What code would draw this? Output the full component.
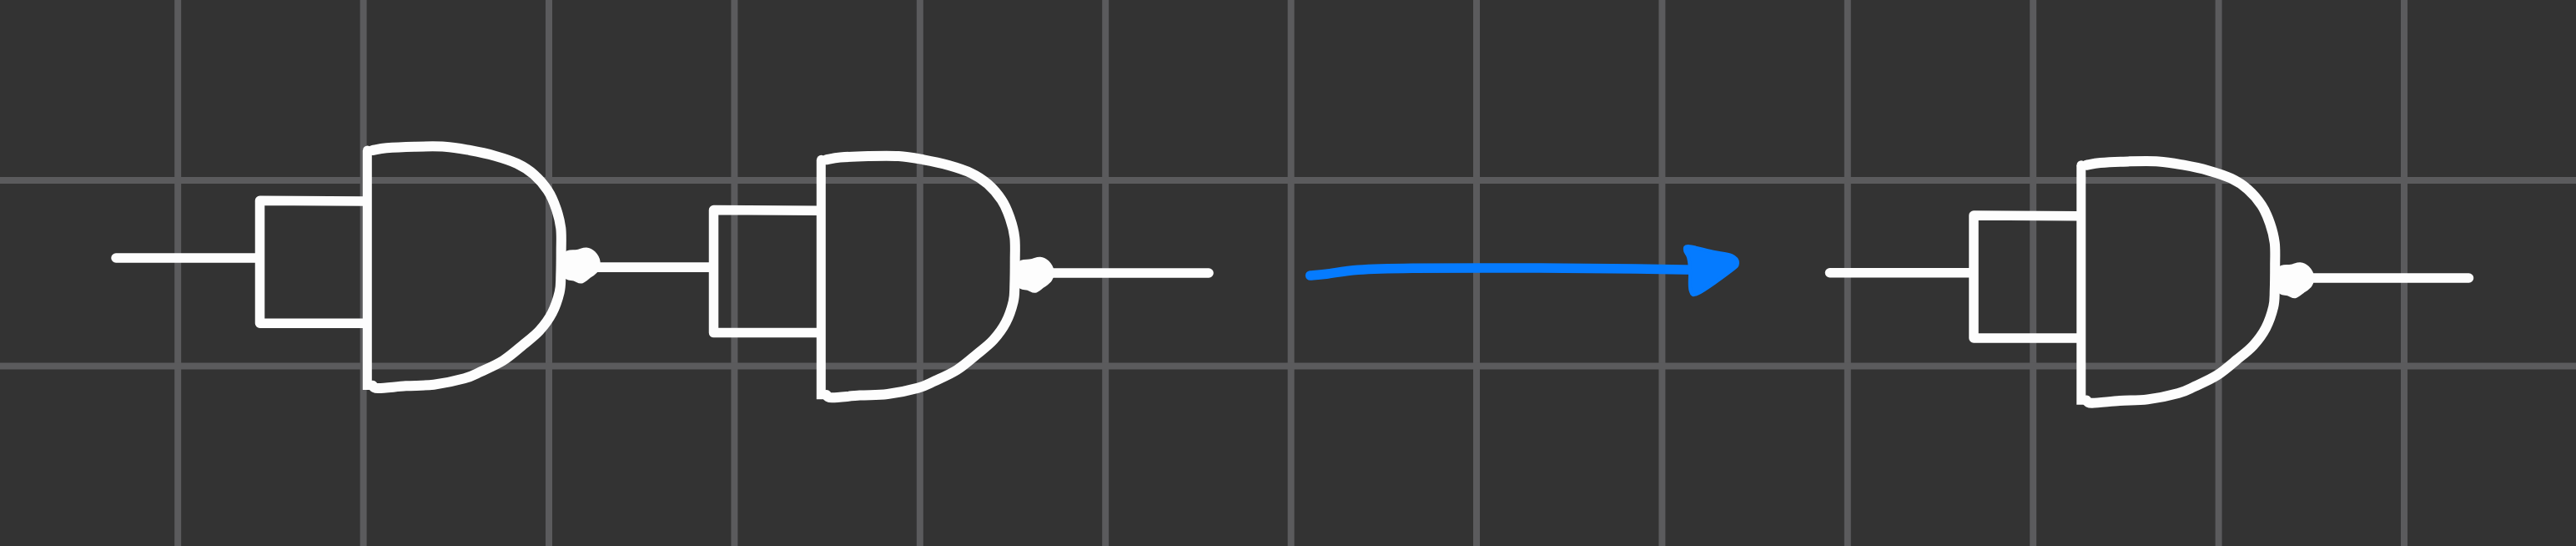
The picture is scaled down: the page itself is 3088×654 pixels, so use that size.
type Pt = [number, number];

// Catmull-Rom through hand-traced points, the strokes are freehand
const smooth = (pts: Pt[], closed = false) => {
  const n = pts.length;
  const at = (i: number) => (closed ? pts[(i + n) % n] : pts[Math.max(0, Math.min(n - 1, i))]);
  let d = `M${pts[0][0]},${pts[0][1]}`;
  const last = closed ? n : n - 1;
  for (let i = 0; i < last; i++) {
    const [p0, p1, p2, p3] = [at(i - 1), at(i), at(i + 1), at(i + 2)];
    const c1 = [p1[0] + (p2[0] - p0[0]) / 6, p1[1] + (p2[1] - p0[1]) / 6];
    const c2 = [p2[0] - (p3[0] - p1[0]) / 6, p2[1] - (p3[1] - p1[1]) / 6];
    d += ` C${c1[0].toFixed(1)},${c1[1].toFixed(1)} ${c2[0].toFixed(1)},${c2[1].toFixed(1)} ${p2[0]},${p2[1]}`;
  }
  return closed ? d + " Z" : d;
};

const gateCurve: Pt[] = [
  [446.7, 180], [463.3, 177.3], [496.7, 175.7], [533.3, 175.7], [563.3, 180], [593.3, 186.7], [620, 196], [640, 209],
  [656.7, 228.3], [666.7, 250], [672.3, 273.3], [672.7, 300], [672.3, 330], [670.7, 350], [661.7, 375], [646.7, 396],
  [626.7, 413.3], [603.3, 431.7], [576.7, 445], [556.7, 453.3], [520, 460.7], [486.7, 462.3], [453.3, 465], [446.7, 461.7],
];

const bubble: Pt[] = [
  [677, 304], [691.7, 300], [703, 297.5], [712.5, 302], [718.5, 313], [716, 324.5], [706.5, 332.5],
  [697, 338.5], [688, 335.5], [677, 331],
];

const arrowHead: Pt[] = [
  [2024, 295], [2052.8, 301.5], [2075.8, 306], [2083, 315], [2075, 324.5], [2035.6, 351.5], [2026.5, 347.5],
  [2026, 323.3], [2024, 308.3], [2020, 300],
];

const arrowShaft: Pt[] = [
  [1570.6, 330], [1589.8, 328.3], [1628, 323.3], [1693, 321.3], [1846, 321], [1961, 322], [2033.7, 323.3],
];

const verticals = Array.from({ length: 13 }, (_, i) => 213.2 + i * 222.4);
const horizontals = [216, 438.4];

const Gate = ({ dx, dy }: { dx: number; dy: number }) => (
  <g transform={`translate(${dx} ${dy})`}>
    <path d="M139,309 H306" strokeWidth={11.5} strokeLinecap="round" />
    <path d="M436,241 L311.5,240.3 V387.3 H436" strokeWidth={11.5} strokeLinejoin="round" />
    <path d="M440.3,180 V467" strokeWidth={11} />
    <circle cx={440.5} cy={180} r={5.5} fill="#fdfdfd" stroke="none" />
    <path d={smooth(gateCurve)} strokeWidth={12} strokeLinecap="round" strokeLinejoin="round" />
    <path d={smooth(bubble, true)} fill="#fdfdfd" strokeWidth={2} />
  </g>
);

const Wire = ({ x1, x2, y }: { x1: number; x2: number; y: number }) => (
  <path d={`M${x1},${y} H${x2}`} strokeWidth={11.5} strokeLinecap="round" />
);

export default function App() {
  return (
    <div className="h-screen w-full overflow-hidden bg-[#333333]">
      <svg className="block h-full w-full" viewBox="0 0 3088 654" fill="none">
        <g stroke="#5b5b5d" strokeWidth={8}>
          {verticals.map((x) => (
            <line key={x} x1={x} y1={0} x2={x} y2={654} />
          ))}
          {horizontals.map((y) => (
            <line key={y} x1={0} y1={y} x2={3088} y2={y} />
          ))}
        </g>

        <g stroke="#fdfdfd">
          <Gate dx={0} dy={0} />
          <Wire x1={712} x2={850} y={320.3} />
          <Gate dx={544} dy={11.3} />
          <Wire x1={1256} x2={1449} y={327} />
          <Gate dx={2054.5} dy={17.7} />
          <Wire x1={2766} x2={2959.5} y={333} />
        </g>

        <path d={smooth(arrowShaft)} stroke="#057bff" strokeWidth={11.5} strokeLinecap="round" />
        <path d={smooth(arrowHead, true)} fill="#057bff" stroke="#057bff" strokeWidth={4} strokeLinejoin="round" />
      </svg>
    </div>
  );
}
